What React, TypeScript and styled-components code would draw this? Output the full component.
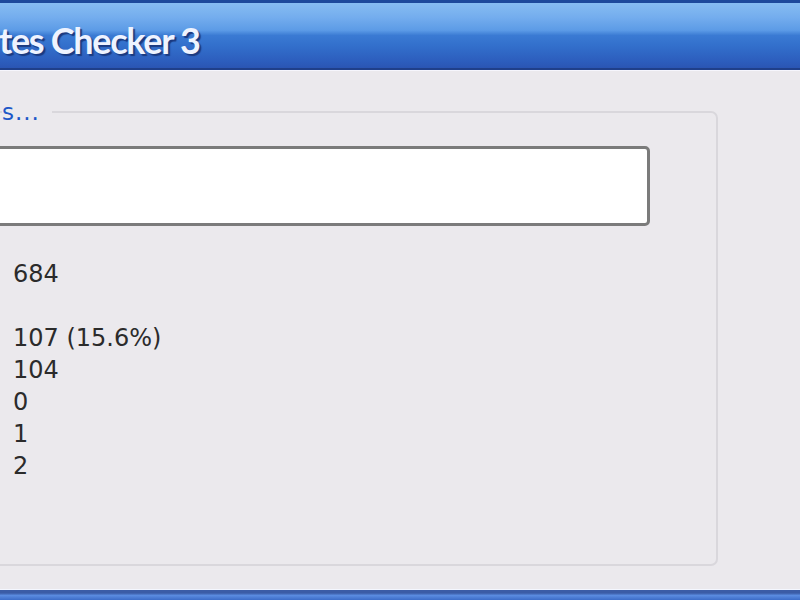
import React from 'react';
import styled, { createGlobalStyle } from 'styled-components';

const GlobalStyle = createGlobalStyle`
    html, body {
        margin: 0;
        padding: 0;
        background: #ebe9ed;
    }
    body {
        font-family: 'DejaVu Sans', Verdana, sans-serif;
    }
`;

const stats = ['684', '', '107 (15.6%)', '104', '0', '1', '2'];

const App = () => {
    return (
        <>
            <GlobalStyle />
            <Window>
                <TitleBar>
                    <Title>tes Checker 3</Title>
                </TitleBar>

                <Body>
                    <Group>
                        <Legend>s...</Legend>
                        <PathBox />
                        <Stats>
                            {stats.map((s, i) => (
                                <StatLine key={i}>{s || '\u00a0'}</StatLine>
                            ))}
                        </Stats>
                    </Group>
                </Body>

                {/* taskbar edge at the bottom */}
                <BottomBar />
            </Window>
        </>
    );
};

const Window = styled.div`
    width: 800px;
    height: 600px;
    overflow: hidden;
    display: flex;
    flex-direction: column;
    background: #ebe9ed;
`;

const TitleBar = styled.div`
    height: 70px;
    flex: none;
    display: flex;
    align-items: flex-start;
    box-sizing: border-box;
    border-top: 3px solid #1d4a9c;
    border-bottom: 2px solid #1f3f8a;
    box-shadow: 0 1px 0 #f6f6fd;
    background: linear-gradient(
        to bottom,
        #86bdf2 0%,
        #74adee 22%,
        #5c9be6 42%,
        #3a7ad3 50%,
        #3370cc 65%,
        #2c5dbd 90%,
        #2a55b3 100%
    );
`;

const Title = styled.div`
    font-family: Lato, 'Liberation Sans', sans-serif;
    font-weight: bold;
    font-size: 36px;
    letter-spacing: -1.3px;
    line-height: 36px;
    color: #eef3ff;
    margin: 19px 0 0 -1px;
    text-shadow: 2px 2px 1px #1b3a80;
    white-space: nowrap;
`;

const Body = styled.div`
    flex: 1;
    padding-top: 29px;
`;

const Group = styled.fieldset`
    margin: 0 0 0 -20px;
    width: 738px;
    height: 467px;
    box-sizing: border-box;
    padding: 0 0 0 20px;
    border: 2px solid #d9d7dc;
    border-radius: 7px;
    min-width: 0;
`;

const Legend = styled.legend`
    padding: 0 12px 0 0;
    margin: 0;
    font-size: 23px;
    line-height: 26px;
    color: #1d57c8;
    letter-spacing: 1px;
`;

const PathBox = styled.div`
    margin: 21px 0 0 -40px;
    width: 688px;
    height: 80px;
    box-sizing: border-box;
    background: #ffffff;
    border: 3px solid #7b7b7b;
    border-radius: 5px;
`;

const Stats = styled.div`
    margin-top: 32px;
    padding-left: 11px;
`;

const StatLine = styled.div`
    font-size: 24px;
    line-height: 32px;
    height: 32px;
    color: #2b2b2b;
    white-space: nowrap;
`;

const BottomBar = styled.div`
    height: 10px;
    flex: none;
    margin-top: auto;
    border-top: 1px solid #f4f7ff;
    background: linear-gradient(to bottom, #3b5ca6 0%, #3b5ca6 30%, #5a8be0 55%, #3c6cc8 100%);
`;

export default App;
